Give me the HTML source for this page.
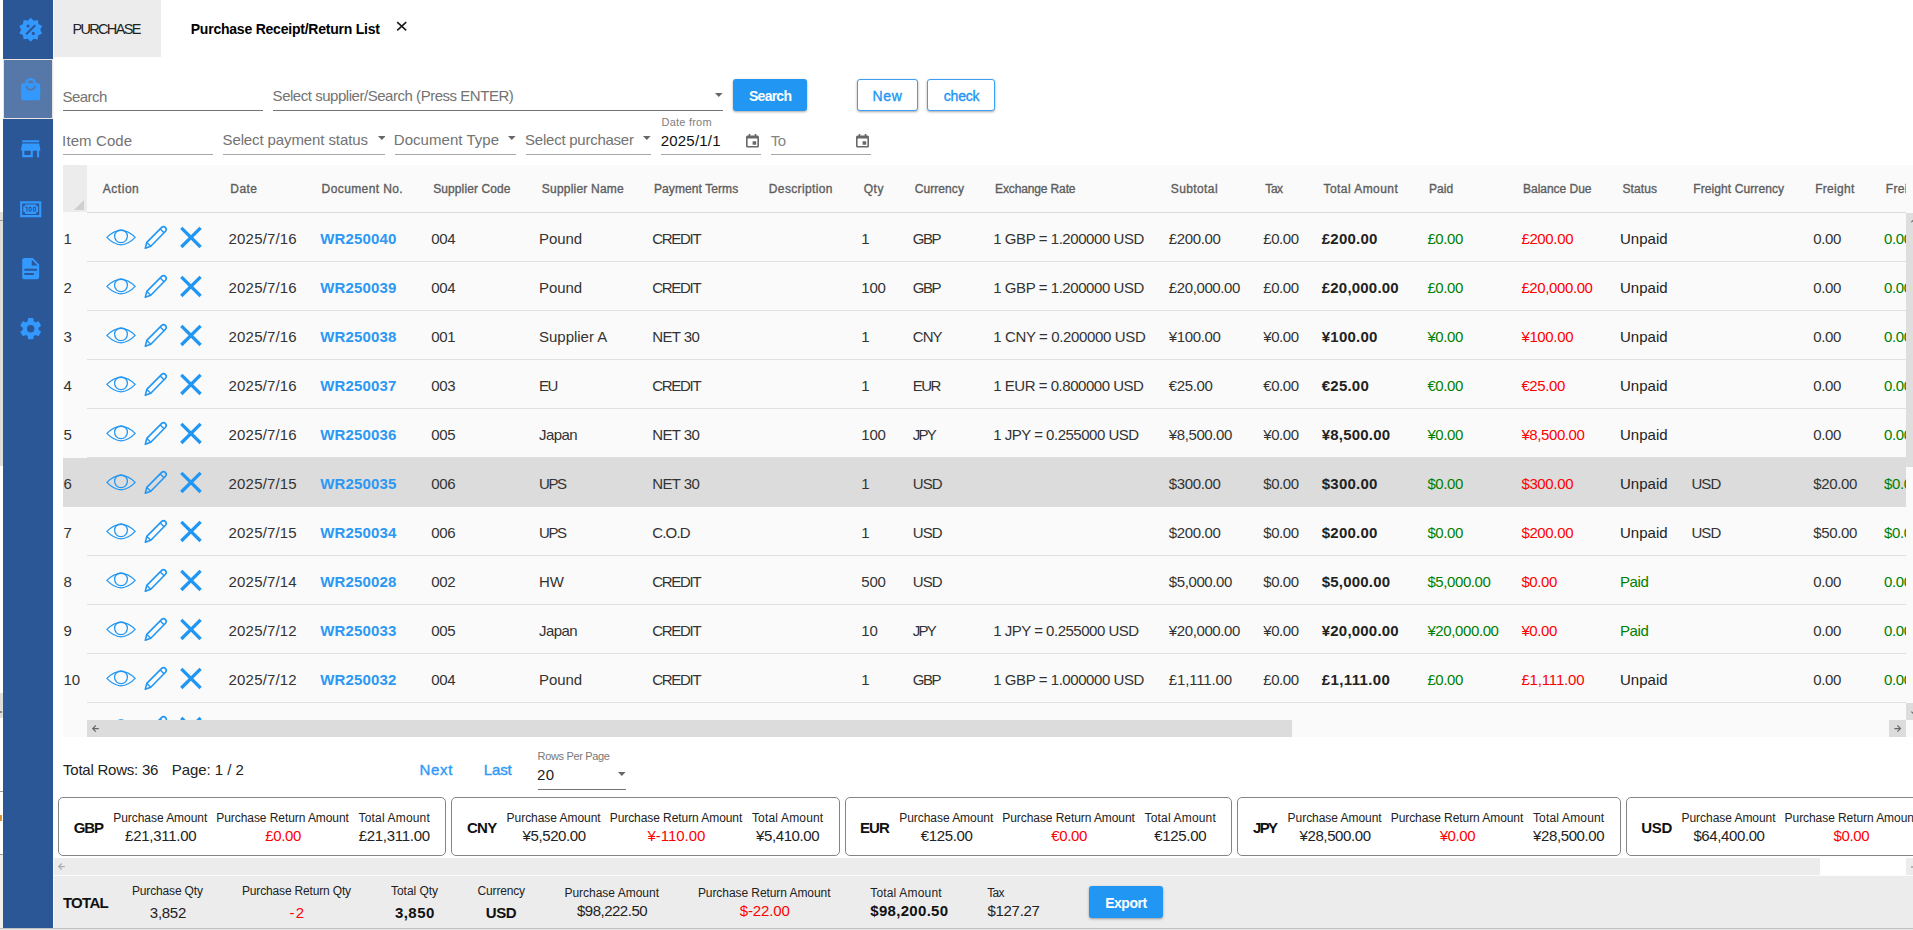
<!DOCTYPE html>
<html lang="en"><head><meta charset="utf-8"><title>Purchase Receipt/Return List</title><style>
html,body{margin:0;padding:0;}
body{width:1913px;height:930px;overflow:hidden;position:relative;background:#fff;font-family:"Liberation Sans",sans-serif;}
.r{position:absolute;display:block;}
.t{position:absolute;white-space:pre;line-height:20px;height:20px;}
.btn{border-radius:3px;box-shadow:0 1px 2.5px rgba(0,0,0,.35);}
</style></head><body>
<div class="r" style="left:0px;top:212px;width:3px;height:254px;background:#dedede;"></div>
<div class="r" style="left:0px;top:693px;width:3px;height:25px;background:#dedede;"></div>
<div class="r" style="left:0px;top:711px;width:2px;height:2px;background:#8a8a8a;"></div>
<div class="r" style="left:0px;top:220px;width:3px;height:1px;background:#9a9a9a;"></div>
<div class="r" style="left:0px;top:791px;width:3px;height:1px;background:#9a9a9a;"></div>
<div class="r" style="left:0px;top:854px;width:3px;height:1px;background:#a0a0a0;"></div>
<div class="r" style="left:0px;top:855px;width:3px;height:73px;background:#efefef;"></div>
<div class="r" style="left:0px;top:815px;width:2px;height:6px;background:#d9952b;"></div>
<div class="r" style="left:3px;top:0px;width:50px;height:928px;background:#2b5797;"></div>
<div class="r" style="left:53px;top:0px;width:1px;height:928px;background:#faf8f5;"></div>
<div class="r" style="left:3px;top:59px;width:50px;height:60px;background:#5578a9;box-sizing:border-box;border:1px solid #e9e4df;"></div>
<svg class="r" style="left:17.8px;top:16.7px;" width="25.4" height="25.4" viewBox="0 0 24 24"><path fill="#3399ff" d="M18.65,2.85L19.26,6.71L22.77,8.5L21,12L22.78,15.5L19.24,17.29L18.63,21.15L14.74,20.54L11.97,23.3L9.19,20.5L5.33,21.14L4.71,17.25L1.22,15.47L3,11.97L1.23,8.5L4.74,6.69L5.35,2.86L9.22,3.5L12,0.69L14.77,3.46L18.65,2.85M9.5,7A1.5,1.5 0 0,0 8,8.5A1.5,1.5 0 0,0 9.5,10A1.5,1.5 0 0,0 11,8.5A1.5,1.5 0 0,0 9.5,7M14.5,14A1.5,1.5 0 0,0 13,15.5A1.5,1.5 0 0,0 14.5,17A1.5,1.5 0 0,0 16,15.5A1.5,1.5 0 0,0 14.5,14M8.41,17L17,8.41L15.59,7L7,15.59L8.41,17Z"/></svg>
<svg class="r" style="left:17.8px;top:76.8px;" width="25.4" height="25.4" viewBox="0 0 24 24"><path fill="#3399ff" d="M12,13A5,5 0 0,1 7,8H9A3,3 0 0,0 12,11A3,3 0 0,0 15,8H17A5,5 0 0,1 12,13M12,3A3,3 0 0,1 15,6H9A3,3 0 0,1 12,3M19,6H17A5,5 0 0,0 12,1A5,5 0 0,0 7,6H5C3.89,6 3,6.89 3,8V20A2,2 0 0,0 5,22H19A2,2 0 0,0 21,20V8C21,6.89 20.1,6 19,6Z"/></svg>
<svg class="r" style="left:17.9px;top:136.3px;" width="25.4" height="25.4" viewBox="0 0 24 24"><path fill="#3399ff" d="M12,18H6V14H12M21,14V12L20,7H4L3,12V14H4V20H14V14H18V20H20V14M20,4H4V6H20V4Z"/></svg>
<svg class="r" style="left:17.7px;top:196.2px;" width="25.4" height="25.4" viewBox="0 0 24 24"><path fill="#3399ff" d="M2,5H22V20H2V5M20,18V7H4V18H20M17,8A2,2 0 0,0 19,10V15A2,2 0 0,0 17,17H7A2,2 0 0,0 5,15V10A2,2 0 0,0 7,8H17M17,13V12C17,10.9 16.33,10 15.5,10C14.67,10 14,10.9 14,12V13C14,14.1 14.67,15 15.5,15C16.33,15 17,14.1 17,13M15.5,11A0.5,0.5 0 0,1 16,11.5V13.5A0.5,0.5 0 0,1 15.5,14A0.5,0.5 0 0,1 15,13.5V11.5A0.5,0.5 0 0,1 15.5,11M13,13V12C13,10.9 12.33,10 11.5,10C10.67,10 10,10.9 10,12V13C10,14.1 10.67,15 11.5,15C12.33,15 13,14.1 13,13M11.5,11A0.5,0.5 0 0,1 12,11.5V13.5A0.5,0.5 0 0,1 11.5,14A0.5,0.5 0 0,1 11,13.5V11.5A0.5,0.5 0 0,1 11.5,11M8,15H9V10H8L7,10.5V11.5L8,11V15Z"/></svg>
<svg class="r" style="left:18.0px;top:256.3px;" width="25.4" height="25.4" viewBox="0 0 24 24"><path fill="#3399ff" d="M13,9H18.5L13,3.5V9M6,2H14L20,8V20A2,2 0 0,1 18,22H6C4.89,22 4,21.1 4,20V4C4,2.89 4.89,2 6,2M15,18V16H6V18H15M18,14V12H6V14H18Z"/></svg>
<svg class="r" style="left:18.0px;top:316.3px;" width="25.4" height="25.4" viewBox="0 0 24 24"><path fill="#3399ff" d="M12,15.5A3.5,3.5 0 0,1 8.5,12A3.5,3.5 0 0,1 12,8.5A3.5,3.5 0 0,1 15.5,12A3.5,3.5 0 0,1 12,15.5M19.43,12.97C19.47,12.65 19.5,12.33 19.5,12C19.5,11.67 19.47,11.34 19.43,11L21.54,9.37C21.73,9.22 21.78,8.95 21.66,8.73L19.66,5.27C19.54,5.05 19.27,4.96 19.05,5.05L16.56,6.05C16.04,5.66 15.5,5.32 14.87,5.07L14.5,2.42C14.46,2.18 14.25,2 14,2H10C9.75,2 9.54,2.18 9.5,2.42L9.13,5.07C8.5,5.32 7.96,5.66 7.44,6.05L4.95,5.05C4.73,4.96 4.46,5.05 4.34,5.27L2.34,8.73C2.21,8.95 2.27,9.22 2.46,9.37L4.57,11C4.53,11.34 4.5,11.67 4.5,12C4.5,12.33 4.53,12.65 4.57,12.97L2.46,14.63C2.27,14.78 2.21,15.05 2.34,15.27L4.34,18.73C4.46,18.95 4.73,19.03 4.95,18.95L7.44,17.94C7.96,18.34 8.5,18.68 9.13,18.93L9.5,21.58C9.54,21.82 9.75,22 10,22H14C14.25,22 14.46,21.82 14.5,21.58L14.87,18.93C15.5,18.67 16.04,18.34 16.56,17.94L19.05,18.95C19.27,19.03 19.54,18.95 19.66,18.73L21.66,15.27C21.78,15.05 21.73,14.78 21.54,14.63L19.43,12.97Z"/></svg>
<div class="r" style="left:54px;top:0px;width:106.6px;height:57px;background:#ececec;"></div>
<span class="t" style="left:72.41px;top:19.00px;font-size:14.5px;color:#222;letter-spacing:-1.667px;">PURCHASE</span>
<span class="t" style="left:190.76px;top:19.00px;font-size:14px;color:#000;letter-spacing:-0.225px;font-weight:700;">Purchase Receipt/Return List</span>
<svg class="r" style="left:395px;top:20px;" width="14" height="14" viewBox="0 0 14 14"><path d="M2.2,2.2L11.2,10.3M11.2,2.2L2.2,10.3" stroke="#1a1a1a" stroke-width="1.6" fill="none"/></svg>
<span class="t" style="left:62.42px;top:87.00px;font-size:15px;color:#737373;letter-spacing:-0.515px;">Search</span>
<div class="r" style="left:63px;top:110px;width:200px;height:1px;background:#737373;"></div>
<span class="t" style="left:272.60px;top:86.00px;font-size:15px;color:#737373;letter-spacing:-0.467px;">Select supplier/Search (Press ENTER)</span>
<div class="r" style="left:273px;top:110px;width:450px;height:1px;background:#737373;"></div>
<svg class="r" style="left:715.3px;top:93px;" width="7.6" height="4" viewBox="0 0 7.6 4"><path d="M0,0H7.6L3.8,4Z" fill="#666"/></svg>
<div class="r btn" style="left:733px;top:79px;width:74px;height:31.5px;background:#2196f3;"></div>
<span class="t" style="left:749.00px;top:86.00px;font-size:14px;color:#fff;letter-spacing:-0.746px;font-weight:700;">Search</span>
<div class="r btn" style="left:857px;top:79px;width:60.5px;height:31.5px;background:#fff;box-sizing:border-box;border:1px solid #3a9ff5;"></div>
<span class="t" style="left:872.55px;top:86.00px;font-size:14px;color:#2196f3;letter-spacing:0.599px;-webkit-text-stroke:0.35px currentColor;">New</span>
<div class="r btn" style="left:927px;top:79px;width:67.6px;height:31.5px;background:#fff;box-sizing:border-box;border:1px solid #3a9ff5;"></div>
<span class="t" style="left:943.81px;top:86.00px;font-size:14px;color:#2196f3;letter-spacing:-0.226px;-webkit-text-stroke:0.35px currentColor;">check</span>
<span class="t" style="left:62.12px;top:131.00px;font-size:15px;color:#737373;letter-spacing:0.106px;">Item Code</span>
<div class="r" style="left:63px;top:154px;width:149.6px;height:1px;background:#a8a8a8;"></div>
<span class="t" style="left:222.52px;top:130.00px;font-size:15px;color:#737373;letter-spacing:-0.108px;">Select payment status</span>
<svg class="r" style="left:377.5px;top:135.8px;" width="7.6" height="4" viewBox="0 0 7.6 4"><path d="M0,0H7.6L3.8,4Z" fill="#666"/></svg>
<div class="r" style="left:223px;top:154px;width:162px;height:1px;background:#a8a8a8;"></div>
<span class="t" style="left:393.77px;top:130.00px;font-size:15px;color:#737373;letter-spacing:0.043px;">Document Type</span>
<svg class="r" style="left:508.3px;top:135.8px;" width="7.6" height="4" viewBox="0 0 7.6 4"><path d="M0,0H7.6L3.8,4Z" fill="#666"/></svg>
<div class="r" style="left:395px;top:154px;width:121px;height:1px;background:#a8a8a8;"></div>
<span class="t" style="left:525.12px;top:130.00px;font-size:15px;color:#737373;letter-spacing:-0.249px;">Select purchaser</span>
<svg class="r" style="left:643.2px;top:135.8px;" width="7.6" height="4" viewBox="0 0 7.6 4"><path d="M0,0H7.6L3.8,4Z" fill="#666"/></svg>
<div class="r" style="left:526px;top:154px;width:125px;height:1px;background:#a8a8a8;"></div>
<span class="t" style="left:661.60px;top:112.00px;font-size:11px;color:#808080;letter-spacing:0.216px;">Date from</span>
<span class="t" style="left:660.75px;top:131.00px;font-size:15px;color:#111;letter-spacing:0.199px;">2025/1/1</span>
<div class="r" style="left:661px;top:154px;width:100px;height:1px;background:#a8a8a8;"></div>
<span class="t" style="left:770.86px;top:131.00px;font-size:15px;color:#858585;letter-spacing:-0.677px;">To</span>
<div class="r" style="left:771px;top:154px;width:100px;height:1px;background:#a8a8a8;"></div>
<svg class="r" style="left:746px;top:134px;" width="13" height="13.6" viewBox="0 0 13 13.6"><path fill="#686868" fill-rule="evenodd" d="M2.6,0H4.3V1.4H8.7V0H10.4V1.4H11.4Q13,1.4 13,3V12Q13,13.6 11.4,13.6H1.6Q0,13.6 0,12V3Q0,1.4 1.6,1.4H2.6ZM1.6,4.6V12H11.4V4.6ZM6.6,7.2H10.2V10.8H6.6Z"/></svg>
<svg class="r" style="left:856px;top:134px;" width="13" height="13.6" viewBox="0 0 13 13.6"><path fill="#686868" fill-rule="evenodd" d="M2.6,0H4.3V1.4H8.7V0H10.4V1.4H11.4Q13,1.4 13,3V12Q13,13.6 11.4,13.6H1.6Q0,13.6 0,12V3Q0,1.4 1.6,1.4H2.6ZM1.6,4.6V12H11.4V4.6ZM6.6,7.2H10.2V10.8H6.6Z"/></svg>
<div class="r" style="left:63px;top:165px;width:1850px;height:572px;background:#fafafa;"></div>
<div class="r" style="left:63px;top:165px;width:24px;height:47px;background:#ececec;"></div>
<svg class="r" style="left:74px;top:200px;" width="10" height="10" viewBox="0 0 10 10"><path d="M10,0V10H0Z" fill="#cfcfcf"/></svg>
<div class="r" style="left:87px;top:212px;width:1819px;height:1px;background:#dcdcdc;"></div>
<span class="t" style="left:102.78px;top:179.00px;font-size:12px;color:#5e5e5e;letter-spacing:0.529px;-webkit-text-stroke:0.35px currentColor;">Action</span>
<span class="t" style="left:230.32px;top:179.00px;font-size:12px;color:#5e5e5e;letter-spacing:0.419px;-webkit-text-stroke:0.35px currentColor;">Date</span>
<span class="t" style="left:321.62px;top:179.00px;font-size:12px;color:#5e5e5e;letter-spacing:0.398px;-webkit-text-stroke:0.35px currentColor;">Document No.</span>
<span class="t" style="left:433.16px;top:179.00px;font-size:12px;color:#5e5e5e;letter-spacing:0.110px;-webkit-text-stroke:0.35px currentColor;">Supplier Code</span>
<span class="t" style="left:541.86px;top:179.00px;font-size:12px;color:#5e5e5e;letter-spacing:0.200px;-webkit-text-stroke:0.35px currentColor;">Supplier Name</span>
<span class="t" style="left:654.02px;top:179.00px;font-size:12px;color:#5e5e5e;letter-spacing:0.081px;-webkit-text-stroke:0.35px currentColor;">Payment Terms</span>
<span class="t" style="left:768.82px;top:179.00px;font-size:12px;color:#5e5e5e;letter-spacing:0.363px;-webkit-text-stroke:0.35px currentColor;">Description</span>
<span class="t" style="left:863.63px;top:179.00px;font-size:12px;color:#5e5e5e;letter-spacing:0.660px;-webkit-text-stroke:0.35px currentColor;">Qty</span>
<span class="t" style="left:914.69px;top:179.00px;font-size:12px;color:#5e5e5e;letter-spacing:0.078px;-webkit-text-stroke:0.35px currentColor;">Currency</span>
<span class="t" style="left:995.02px;top:179.00px;font-size:12px;color:#5e5e5e;letter-spacing:-0.129px;-webkit-text-stroke:0.35px currentColor;">Exchange Rate</span>
<span class="t" style="left:1170.76px;top:179.00px;font-size:12px;color:#5e5e5e;letter-spacing:0.400px;-webkit-text-stroke:0.35px currentColor;">Subtotal</span>
<span class="t" style="left:1265.33px;top:179.00px;font-size:12px;color:#5e5e5e;letter-spacing:-0.445px;-webkit-text-stroke:0.35px currentColor;">Tax</span>
<span class="t" style="left:1323.53px;top:179.00px;font-size:12px;color:#5e5e5e;letter-spacing:0.444px;-webkit-text-stroke:0.35px currentColor;">Total Amount</span>
<span class="t" style="left:1429.02px;top:179.00px;font-size:12px;color:#5e5e5e;letter-spacing:0.076px;-webkit-text-stroke:0.35px currentColor;">Paid</span>
<span class="t" style="left:1523.02px;top:179.00px;font-size:12px;color:#5e5e5e;letter-spacing:-0.020px;-webkit-text-stroke:0.35px currentColor;">Balance Due</span>
<span class="t" style="left:1622.46px;top:179.00px;font-size:12px;color:#5e5e5e;letter-spacing:0.109px;-webkit-text-stroke:0.35px currentColor;">Status</span>
<span class="t" style="left:1693.22px;top:179.00px;font-size:12px;color:#5e5e5e;letter-spacing:0.096px;-webkit-text-stroke:0.35px currentColor;">Freight Currency</span>
<span class="t" style="left:1815.22px;top:179.00px;font-size:12px;color:#5e5e5e;letter-spacing:0.285px;-webkit-text-stroke:0.35px currentColor;">Freight</span>
<div class="r" style="left:1880px;top:170px;width:26px;height:40px;overflow:hidden;">
<span class="t" style="left:5.82px;top:9.00px;font-size:12px;color:#5e5e5e;letter-spacing:0.285px;-webkit-text-stroke:0.35px currentColor;">Freight</span>
</div>
<div class="r" style="left:87px;top:261px;width:1819px;height:1px;background:#e0e0e0;"></div>
<span class="t" style="left:63.60px;top:229.00px;font-size:15px;color:#333;letter-spacing:-0.258px;">1</span>
<svg class="r" style="left:100px;top:220px;" width="110" height="34" viewBox="100 220 110 34"><path d="M106.9,237.4Q121,223.4 135.2,237.4Q121,252.1 106.9,237.4Z" fill="none" stroke="#2196f3" stroke-width="1.25" stroke-linejoin="round"/><circle cx="121" cy="236.3" r="6.4" fill="none" stroke="#2196f3" stroke-width="1.25"/><path d="M145.3,248.2L146.8,242.4L161.7,227.4Q163.6,225.7 165.5,227.6Q167.2,229.5 165.5,231.3L150.8,246.3Z" fill="none" stroke="#2196f3" stroke-width="1.6" stroke-linejoin="round"/><path d="M146.8,242.4L150.8,246.3M160.2,228.9L164.1,232.8" fill="none" stroke="#2196f3" stroke-width="1.4"/><path d="M181.3,227.9L200.6,247.0M200.6,227.9L181.3,247.0" fill="none" stroke="#2196f3" stroke-width="3.3"/></svg>
<span class="t" style="left:228.60px;top:229.00px;font-size:15px;color:#333;letter-spacing:0.171px;">2025/7/16</span>
<span class="t" style="left:320.30px;top:229.00px;font-size:15px;color:#2b98f3;letter-spacing:0.141px;font-weight:700;">WR250040</span>
<span class="t" style="left:431.20px;top:229.00px;font-size:15px;color:#333;letter-spacing:-0.258px;">004</span>
<span class="t" style="left:539.00px;top:229.00px;font-size:15px;color:#333;letter-spacing:-0.084px;">Pound</span>
<span class="t" style="left:652.20px;top:229.00px;font-size:15px;color:#333;letter-spacing:-1.270px;">CREDIT</span>
<span class="t" style="left:861.30px;top:229.00px;font-size:15px;color:#333;letter-spacing:-0.258px;">1</span>
<span class="t" style="left:912.80px;top:229.00px;font-size:15px;color:#333;letter-spacing:-1.461px;">GBP</span>
<span class="t" style="left:993.20px;top:229.00px;font-size:15px;color:#333;letter-spacing:-0.435px;">1 GBP = 1.200000 USD</span>
<span class="t" style="left:1168.80px;top:229.00px;font-size:15px;color:#333;letter-spacing:-0.352px;">£200.00</span>
<span class="t" style="left:1263.20px;top:229.00px;font-size:15px;color:#333;letter-spacing:-0.390px;">£0.00</span>
<span class="t" style="left:1321.80px;top:229.00px;font-size:15px;color:#222;letter-spacing:0.220px;font-weight:700;">£200.00</span>
<span class="t" style="left:1427.40px;top:229.00px;font-size:15px;color:#008000;letter-spacing:-0.390px;">£0.00</span>
<span class="t" style="left:1521.40px;top:229.00px;font-size:15px;color:#ff0000;letter-spacing:-0.352px;">£200.00</span>
<span class="t" style="left:1620.00px;top:229.00px;font-size:15px;color:#222;letter-spacing:0.021px;">Unpaid</span>
<span class="t" style="left:1813.30px;top:229.00px;font-size:15px;color:#333;letter-spacing:-0.423px;">0.00</span>
<div class="r" style="left:1880px;top:223px;width:26px;height:30px;overflow:hidden;">
<span class="t" style="left:4.10px;top:6.00px;font-size:15px;color:#008000;letter-spacing:-0.423px;">0.00</span>
</div>
<div class="r" style="left:87px;top:310px;width:1819px;height:1px;background:#e0e0e0;"></div>
<span class="t" style="left:63.60px;top:278.00px;font-size:15px;color:#333;letter-spacing:-0.258px;">2</span>
<svg class="r" style="left:100px;top:269px;" width="110" height="34" viewBox="100 220 110 34"><path d="M106.9,237.4Q121,223.4 135.2,237.4Q121,252.1 106.9,237.4Z" fill="none" stroke="#2196f3" stroke-width="1.25" stroke-linejoin="round"/><circle cx="121" cy="236.3" r="6.4" fill="none" stroke="#2196f3" stroke-width="1.25"/><path d="M145.3,248.2L146.8,242.4L161.7,227.4Q163.6,225.7 165.5,227.6Q167.2,229.5 165.5,231.3L150.8,246.3Z" fill="none" stroke="#2196f3" stroke-width="1.6" stroke-linejoin="round"/><path d="M146.8,242.4L150.8,246.3M160.2,228.9L164.1,232.8" fill="none" stroke="#2196f3" stroke-width="1.4"/><path d="M181.3,227.9L200.6,247.0M200.6,227.9L181.3,247.0" fill="none" stroke="#2196f3" stroke-width="3.3"/></svg>
<span class="t" style="left:228.60px;top:278.00px;font-size:15px;color:#333;letter-spacing:0.171px;">2025/7/16</span>
<span class="t" style="left:320.30px;top:278.00px;font-size:15px;color:#2b98f3;letter-spacing:0.141px;font-weight:700;">WR250039</span>
<span class="t" style="left:431.20px;top:278.00px;font-size:15px;color:#333;letter-spacing:-0.258px;">004</span>
<span class="t" style="left:539.00px;top:278.00px;font-size:15px;color:#333;letter-spacing:-0.084px;">Pound</span>
<span class="t" style="left:652.20px;top:278.00px;font-size:15px;color:#333;letter-spacing:-1.270px;">CREDIT</span>
<span class="t" style="left:861.30px;top:278.00px;font-size:15px;color:#333;letter-spacing:-0.258px;">100</span>
<span class="t" style="left:912.80px;top:278.00px;font-size:15px;color:#333;letter-spacing:-1.461px;">GBP</span>
<span class="t" style="left:993.20px;top:278.00px;font-size:15px;color:#333;letter-spacing:-0.435px;">1 GBP = 1.200000 USD</span>
<span class="t" style="left:1168.80px;top:278.00px;font-size:15px;color:#333;letter-spacing:-0.389px;">£20,000.00</span>
<span class="t" style="left:1263.20px;top:278.00px;font-size:15px;color:#333;letter-spacing:-0.390px;">£0.00</span>
<span class="t" style="left:1321.80px;top:278.00px;font-size:15px;color:#222;letter-spacing:0.196px;font-weight:700;">£20,000.00</span>
<span class="t" style="left:1427.40px;top:278.00px;font-size:15px;color:#008000;letter-spacing:-0.390px;">£0.00</span>
<span class="t" style="left:1521.40px;top:278.00px;font-size:15px;color:#ff0000;letter-spacing:-0.389px;">£20,000.00</span>
<span class="t" style="left:1620.00px;top:278.00px;font-size:15px;color:#222;letter-spacing:0.021px;">Unpaid</span>
<span class="t" style="left:1813.30px;top:278.00px;font-size:15px;color:#333;letter-spacing:-0.423px;">0.00</span>
<div class="r" style="left:1880px;top:272px;width:26px;height:30px;overflow:hidden;">
<span class="t" style="left:4.10px;top:6.00px;font-size:15px;color:#008000;letter-spacing:-0.423px;">0.00</span>
</div>
<div class="r" style="left:87px;top:359px;width:1819px;height:1px;background:#e0e0e0;"></div>
<span class="t" style="left:63.60px;top:327.00px;font-size:15px;color:#333;letter-spacing:-0.258px;">3</span>
<svg class="r" style="left:100px;top:318px;" width="110" height="34" viewBox="100 220 110 34"><path d="M106.9,237.4Q121,223.4 135.2,237.4Q121,252.1 106.9,237.4Z" fill="none" stroke="#2196f3" stroke-width="1.25" stroke-linejoin="round"/><circle cx="121" cy="236.3" r="6.4" fill="none" stroke="#2196f3" stroke-width="1.25"/><path d="M145.3,248.2L146.8,242.4L161.7,227.4Q163.6,225.7 165.5,227.6Q167.2,229.5 165.5,231.3L150.8,246.3Z" fill="none" stroke="#2196f3" stroke-width="1.6" stroke-linejoin="round"/><path d="M146.8,242.4L150.8,246.3M160.2,228.9L164.1,232.8" fill="none" stroke="#2196f3" stroke-width="1.4"/><path d="M181.3,227.9L200.6,247.0M200.6,227.9L181.3,247.0" fill="none" stroke="#2196f3" stroke-width="3.3"/></svg>
<span class="t" style="left:228.60px;top:327.00px;font-size:15px;color:#333;letter-spacing:0.171px;">2025/7/16</span>
<span class="t" style="left:320.30px;top:327.00px;font-size:15px;color:#2b98f3;letter-spacing:0.141px;font-weight:700;">WR250038</span>
<span class="t" style="left:431.20px;top:327.00px;font-size:15px;color:#333;letter-spacing:-0.258px;">001</span>
<span class="t" style="left:539.00px;top:327.00px;font-size:15px;color:#333;letter-spacing:-0.021px;">Supplier A</span>
<span class="t" style="left:652.20px;top:327.00px;font-size:15px;color:#333;letter-spacing:-0.608px;">NET 30</span>
<span class="t" style="left:861.30px;top:327.00px;font-size:15px;color:#333;letter-spacing:-0.258px;">1</span>
<span class="t" style="left:912.80px;top:327.00px;font-size:15px;color:#333;letter-spacing:-0.958px;">CNY</span>
<span class="t" style="left:993.20px;top:327.00px;font-size:15px;color:#333;letter-spacing:-0.360px;">1 CNY = 0.200000 USD</span>
<span class="t" style="left:1168.80px;top:327.00px;font-size:15px;color:#333;letter-spacing:-0.352px;">¥100.00</span>
<span class="t" style="left:1263.20px;top:327.00px;font-size:15px;color:#333;letter-spacing:-0.390px;">¥0.00</span>
<span class="t" style="left:1321.80px;top:327.00px;font-size:15px;color:#222;letter-spacing:0.220px;font-weight:700;">¥100.00</span>
<span class="t" style="left:1427.40px;top:327.00px;font-size:15px;color:#008000;letter-spacing:-0.390px;">¥0.00</span>
<span class="t" style="left:1521.40px;top:327.00px;font-size:15px;color:#ff0000;letter-spacing:-0.352px;">¥100.00</span>
<span class="t" style="left:1620.00px;top:327.00px;font-size:15px;color:#222;letter-spacing:0.021px;">Unpaid</span>
<span class="t" style="left:1813.30px;top:327.00px;font-size:15px;color:#333;letter-spacing:-0.423px;">0.00</span>
<div class="r" style="left:1880px;top:321px;width:26px;height:30px;overflow:hidden;">
<span class="t" style="left:4.10px;top:6.00px;font-size:15px;color:#008000;letter-spacing:-0.423px;">0.00</span>
</div>
<div class="r" style="left:87px;top:408px;width:1819px;height:1px;background:#e0e0e0;"></div>
<span class="t" style="left:63.60px;top:376.00px;font-size:15px;color:#333;letter-spacing:-0.258px;">4</span>
<svg class="r" style="left:100px;top:367px;" width="110" height="34" viewBox="100 220 110 34"><path d="M106.9,237.4Q121,223.4 135.2,237.4Q121,252.1 106.9,237.4Z" fill="none" stroke="#2196f3" stroke-width="1.25" stroke-linejoin="round"/><circle cx="121" cy="236.3" r="6.4" fill="none" stroke="#2196f3" stroke-width="1.25"/><path d="M145.3,248.2L146.8,242.4L161.7,227.4Q163.6,225.7 165.5,227.6Q167.2,229.5 165.5,231.3L150.8,246.3Z" fill="none" stroke="#2196f3" stroke-width="1.6" stroke-linejoin="round"/><path d="M146.8,242.4L150.8,246.3M160.2,228.9L164.1,232.8" fill="none" stroke="#2196f3" stroke-width="1.4"/><path d="M181.3,227.9L200.6,247.0M200.6,227.9L181.3,247.0" fill="none" stroke="#2196f3" stroke-width="3.3"/></svg>
<span class="t" style="left:228.60px;top:376.00px;font-size:15px;color:#333;letter-spacing:0.171px;">2025/7/16</span>
<span class="t" style="left:320.30px;top:376.00px;font-size:15px;color:#2b98f3;letter-spacing:0.141px;font-weight:700;">WR250037</span>
<span class="t" style="left:431.20px;top:376.00px;font-size:15px;color:#333;letter-spacing:-0.258px;">003</span>
<span class="t" style="left:539.00px;top:376.00px;font-size:15px;color:#333;letter-spacing:-1.479px;">EU</span>
<span class="t" style="left:652.20px;top:376.00px;font-size:15px;color:#333;letter-spacing:-1.270px;">CREDIT</span>
<span class="t" style="left:861.30px;top:376.00px;font-size:15px;color:#333;letter-spacing:-0.258px;">1</span>
<span class="t" style="left:912.80px;top:376.00px;font-size:15px;color:#333;letter-spacing:-1.602px;">EUR</span>
<span class="t" style="left:993.20px;top:376.00px;font-size:15px;color:#333;letter-spacing:-0.470px;">1 EUR = 0.800000 USD</span>
<span class="t" style="left:1168.80px;top:376.00px;font-size:15px;color:#333;letter-spacing:-0.368px;">€25.00</span>
<span class="t" style="left:1263.20px;top:376.00px;font-size:15px;color:#333;letter-spacing:-0.390px;">€0.00</span>
<span class="t" style="left:1321.80px;top:376.00px;font-size:15px;color:#222;letter-spacing:0.209px;font-weight:700;">€25.00</span>
<span class="t" style="left:1427.40px;top:376.00px;font-size:15px;color:#008000;letter-spacing:-0.390px;">€0.00</span>
<span class="t" style="left:1521.40px;top:376.00px;font-size:15px;color:#ff0000;letter-spacing:-0.368px;">€25.00</span>
<span class="t" style="left:1620.00px;top:376.00px;font-size:15px;color:#222;letter-spacing:0.021px;">Unpaid</span>
<span class="t" style="left:1813.30px;top:376.00px;font-size:15px;color:#333;letter-spacing:-0.423px;">0.00</span>
<div class="r" style="left:1880px;top:370px;width:26px;height:30px;overflow:hidden;">
<span class="t" style="left:4.10px;top:6.00px;font-size:15px;color:#008000;letter-spacing:-0.423px;">0.00</span>
</div>
<div class="r" style="left:87px;top:457px;width:1819px;height:1px;background:#e0e0e0;"></div>
<span class="t" style="left:63.60px;top:425.00px;font-size:15px;color:#333;letter-spacing:-0.258px;">5</span>
<svg class="r" style="left:100px;top:416px;" width="110" height="34" viewBox="100 220 110 34"><path d="M106.9,237.4Q121,223.4 135.2,237.4Q121,252.1 106.9,237.4Z" fill="none" stroke="#2196f3" stroke-width="1.25" stroke-linejoin="round"/><circle cx="121" cy="236.3" r="6.4" fill="none" stroke="#2196f3" stroke-width="1.25"/><path d="M145.3,248.2L146.8,242.4L161.7,227.4Q163.6,225.7 165.5,227.6Q167.2,229.5 165.5,231.3L150.8,246.3Z" fill="none" stroke="#2196f3" stroke-width="1.6" stroke-linejoin="round"/><path d="M146.8,242.4L150.8,246.3M160.2,228.9L164.1,232.8" fill="none" stroke="#2196f3" stroke-width="1.4"/><path d="M181.3,227.9L200.6,247.0M200.6,227.9L181.3,247.0" fill="none" stroke="#2196f3" stroke-width="3.3"/></svg>
<span class="t" style="left:228.60px;top:425.00px;font-size:15px;color:#333;letter-spacing:0.171px;">2025/7/16</span>
<span class="t" style="left:320.30px;top:425.00px;font-size:15px;color:#2b98f3;letter-spacing:0.141px;font-weight:700;">WR250036</span>
<span class="t" style="left:431.20px;top:425.00px;font-size:15px;color:#333;letter-spacing:-0.258px;">005</span>
<span class="t" style="left:539.00px;top:425.00px;font-size:15px;color:#333;letter-spacing:-0.594px;">Japan</span>
<span class="t" style="left:652.20px;top:425.00px;font-size:15px;color:#333;letter-spacing:-0.608px;">NET 30</span>
<span class="t" style="left:861.30px;top:425.00px;font-size:15px;color:#333;letter-spacing:-0.258px;">100</span>
<span class="t" style="left:912.80px;top:425.00px;font-size:15px;color:#333;letter-spacing:-1.826px;">JPY</span>
<span class="t" style="left:993.20px;top:425.00px;font-size:15px;color:#333;letter-spacing:-0.490px;">1 JPY = 0.255000 USD</span>
<span class="t" style="left:1168.80px;top:425.00px;font-size:15px;color:#333;letter-spacing:-0.403px;">¥8,500.00</span>
<span class="t" style="left:1263.20px;top:425.00px;font-size:15px;color:#333;letter-spacing:-0.390px;">¥0.00</span>
<span class="t" style="left:1321.80px;top:425.00px;font-size:15px;color:#222;letter-spacing:0.186px;font-weight:700;">¥8,500.00</span>
<span class="t" style="left:1427.40px;top:425.00px;font-size:15px;color:#008000;letter-spacing:-0.390px;">¥0.00</span>
<span class="t" style="left:1521.40px;top:425.00px;font-size:15px;color:#ff0000;letter-spacing:-0.403px;">¥8,500.00</span>
<span class="t" style="left:1620.00px;top:425.00px;font-size:15px;color:#222;letter-spacing:0.021px;">Unpaid</span>
<span class="t" style="left:1813.30px;top:425.00px;font-size:15px;color:#333;letter-spacing:-0.423px;">0.00</span>
<div class="r" style="left:1880px;top:419px;width:26px;height:30px;overflow:hidden;">
<span class="t" style="left:4.10px;top:6.00px;font-size:15px;color:#008000;letter-spacing:-0.423px;">0.00</span>
</div>
<div class="r" style="left:63px;top:458px;width:1843px;height:49px;background:#dcdcdc;"></div>
<span class="t" style="left:63.60px;top:474.00px;font-size:15px;color:#333;letter-spacing:-0.258px;">6</span>
<svg class="r" style="left:100px;top:465px;" width="110" height="34" viewBox="100 220 110 34"><path d="M106.9,237.4Q121,223.4 135.2,237.4Q121,252.1 106.9,237.4Z" fill="none" stroke="#2196f3" stroke-width="1.25" stroke-linejoin="round"/><circle cx="121" cy="236.3" r="6.4" fill="none" stroke="#2196f3" stroke-width="1.25"/><path d="M145.3,248.2L146.8,242.4L161.7,227.4Q163.6,225.7 165.5,227.6Q167.2,229.5 165.5,231.3L150.8,246.3Z" fill="none" stroke="#2196f3" stroke-width="1.6" stroke-linejoin="round"/><path d="M146.8,242.4L150.8,246.3M160.2,228.9L164.1,232.8" fill="none" stroke="#2196f3" stroke-width="1.4"/><path d="M181.3,227.9L200.6,247.0M200.6,227.9L181.3,247.0" fill="none" stroke="#2196f3" stroke-width="3.3"/></svg>
<span class="t" style="left:228.60px;top:474.00px;font-size:15px;color:#333;letter-spacing:0.171px;">2025/7/15</span>
<span class="t" style="left:320.30px;top:474.00px;font-size:15px;color:#2b98f3;letter-spacing:0.141px;font-weight:700;">WR250035</span>
<span class="t" style="left:431.20px;top:474.00px;font-size:15px;color:#333;letter-spacing:-0.258px;">006</span>
<span class="t" style="left:539.00px;top:474.00px;font-size:15px;color:#333;letter-spacing:-1.395px;">UPS</span>
<span class="t" style="left:652.20px;top:474.00px;font-size:15px;color:#333;letter-spacing:-0.608px;">NET 30</span>
<span class="t" style="left:861.30px;top:474.00px;font-size:15px;color:#333;letter-spacing:-0.258px;">1</span>
<span class="t" style="left:912.80px;top:474.00px;font-size:15px;color:#333;letter-spacing:-0.965px;">USD</span>
<span class="t" style="left:1168.80px;top:474.00px;font-size:15px;color:#333;letter-spacing:-0.352px;">$300.00</span>
<span class="t" style="left:1263.20px;top:474.00px;font-size:15px;color:#333;letter-spacing:-0.390px;">$0.00</span>
<span class="t" style="left:1321.80px;top:474.00px;font-size:15px;color:#222;letter-spacing:0.220px;font-weight:700;">$300.00</span>
<span class="t" style="left:1427.40px;top:474.00px;font-size:15px;color:#008000;letter-spacing:-0.390px;">$0.00</span>
<span class="t" style="left:1521.40px;top:474.00px;font-size:15px;color:#ff0000;letter-spacing:-0.352px;">$300.00</span>
<span class="t" style="left:1620.00px;top:474.00px;font-size:15px;color:#222;letter-spacing:0.021px;">Unpaid</span>
<span class="t" style="left:1691.50px;top:474.00px;font-size:15px;color:#333;letter-spacing:-0.965px;">USD</span>
<span class="t" style="left:1813.30px;top:474.00px;font-size:15px;color:#333;letter-spacing:-0.368px;">$20.00</span>
<div class="r" style="left:1880px;top:468px;width:26px;height:30px;overflow:hidden;">
<span class="t" style="left:4.10px;top:6.00px;font-size:15px;color:#008000;letter-spacing:-0.390px;">$0.00</span>
</div>
<div class="r" style="left:87px;top:555px;width:1819px;height:1px;background:#e0e0e0;"></div>
<span class="t" style="left:63.60px;top:523.00px;font-size:15px;color:#333;letter-spacing:-0.258px;">7</span>
<svg class="r" style="left:100px;top:514px;" width="110" height="34" viewBox="100 220 110 34"><path d="M106.9,237.4Q121,223.4 135.2,237.4Q121,252.1 106.9,237.4Z" fill="none" stroke="#2196f3" stroke-width="1.25" stroke-linejoin="round"/><circle cx="121" cy="236.3" r="6.4" fill="none" stroke="#2196f3" stroke-width="1.25"/><path d="M145.3,248.2L146.8,242.4L161.7,227.4Q163.6,225.7 165.5,227.6Q167.2,229.5 165.5,231.3L150.8,246.3Z" fill="none" stroke="#2196f3" stroke-width="1.6" stroke-linejoin="round"/><path d="M146.8,242.4L150.8,246.3M160.2,228.9L164.1,232.8" fill="none" stroke="#2196f3" stroke-width="1.4"/><path d="M181.3,227.9L200.6,247.0M200.6,227.9L181.3,247.0" fill="none" stroke="#2196f3" stroke-width="3.3"/></svg>
<span class="t" style="left:228.60px;top:523.00px;font-size:15px;color:#333;letter-spacing:0.171px;">2025/7/15</span>
<span class="t" style="left:320.30px;top:523.00px;font-size:15px;color:#2b98f3;letter-spacing:0.141px;font-weight:700;">WR250034</span>
<span class="t" style="left:431.20px;top:523.00px;font-size:15px;color:#333;letter-spacing:-0.258px;">006</span>
<span class="t" style="left:539.00px;top:523.00px;font-size:15px;color:#333;letter-spacing:-1.395px;">UPS</span>
<span class="t" style="left:652.20px;top:523.00px;font-size:15px;color:#333;letter-spacing:-0.811px;">C.O.D</span>
<span class="t" style="left:861.30px;top:523.00px;font-size:15px;color:#333;letter-spacing:-0.258px;">1</span>
<span class="t" style="left:912.80px;top:523.00px;font-size:15px;color:#333;letter-spacing:-0.965px;">USD</span>
<span class="t" style="left:1168.80px;top:523.00px;font-size:15px;color:#333;letter-spacing:-0.352px;">$200.00</span>
<span class="t" style="left:1263.20px;top:523.00px;font-size:15px;color:#333;letter-spacing:-0.390px;">$0.00</span>
<span class="t" style="left:1321.80px;top:523.00px;font-size:15px;color:#222;letter-spacing:0.220px;font-weight:700;">$200.00</span>
<span class="t" style="left:1427.40px;top:523.00px;font-size:15px;color:#008000;letter-spacing:-0.390px;">$0.00</span>
<span class="t" style="left:1521.40px;top:523.00px;font-size:15px;color:#ff0000;letter-spacing:-0.352px;">$200.00</span>
<span class="t" style="left:1620.00px;top:523.00px;font-size:15px;color:#222;letter-spacing:0.021px;">Unpaid</span>
<span class="t" style="left:1691.50px;top:523.00px;font-size:15px;color:#333;letter-spacing:-0.965px;">USD</span>
<span class="t" style="left:1813.30px;top:523.00px;font-size:15px;color:#333;letter-spacing:-0.368px;">$50.00</span>
<div class="r" style="left:1880px;top:517px;width:26px;height:30px;overflow:hidden;">
<span class="t" style="left:4.10px;top:6.00px;font-size:15px;color:#008000;letter-spacing:-0.390px;">$0.00</span>
</div>
<div class="r" style="left:87px;top:604px;width:1819px;height:1px;background:#e0e0e0;"></div>
<span class="t" style="left:63.60px;top:572.00px;font-size:15px;color:#333;letter-spacing:-0.258px;">8</span>
<svg class="r" style="left:100px;top:563px;" width="110" height="34" viewBox="100 220 110 34"><path d="M106.9,237.4Q121,223.4 135.2,237.4Q121,252.1 106.9,237.4Z" fill="none" stroke="#2196f3" stroke-width="1.25" stroke-linejoin="round"/><circle cx="121" cy="236.3" r="6.4" fill="none" stroke="#2196f3" stroke-width="1.25"/><path d="M145.3,248.2L146.8,242.4L161.7,227.4Q163.6,225.7 165.5,227.6Q167.2,229.5 165.5,231.3L150.8,246.3Z" fill="none" stroke="#2196f3" stroke-width="1.6" stroke-linejoin="round"/><path d="M146.8,242.4L150.8,246.3M160.2,228.9L164.1,232.8" fill="none" stroke="#2196f3" stroke-width="1.4"/><path d="M181.3,227.9L200.6,247.0M200.6,227.9L181.3,247.0" fill="none" stroke="#2196f3" stroke-width="3.3"/></svg>
<span class="t" style="left:228.60px;top:572.00px;font-size:15px;color:#333;letter-spacing:0.171px;">2025/7/14</span>
<span class="t" style="left:320.30px;top:572.00px;font-size:15px;color:#2b98f3;letter-spacing:0.141px;font-weight:700;">WR250028</span>
<span class="t" style="left:431.20px;top:572.00px;font-size:15px;color:#333;letter-spacing:-0.258px;">002</span>
<span class="t" style="left:539.00px;top:572.00px;font-size:15px;color:#333;letter-spacing:-0.170px;">HW</span>
<span class="t" style="left:652.20px;top:572.00px;font-size:15px;color:#333;letter-spacing:-1.270px;">CREDIT</span>
<span class="t" style="left:861.30px;top:572.00px;font-size:15px;color:#333;letter-spacing:-0.258px;">500</span>
<span class="t" style="left:912.80px;top:572.00px;font-size:15px;color:#333;letter-spacing:-0.965px;">USD</span>
<span class="t" style="left:1168.80px;top:572.00px;font-size:15px;color:#333;letter-spacing:-0.403px;">$5,000.00</span>
<span class="t" style="left:1263.20px;top:572.00px;font-size:15px;color:#333;letter-spacing:-0.390px;">$0.00</span>
<span class="t" style="left:1321.80px;top:572.00px;font-size:15px;color:#222;letter-spacing:0.186px;font-weight:700;">$5,000.00</span>
<span class="t" style="left:1427.40px;top:572.00px;font-size:15px;color:#008000;letter-spacing:-0.403px;">$5,000.00</span>
<span class="t" style="left:1521.40px;top:572.00px;font-size:15px;color:#ff0000;letter-spacing:-0.390px;">$0.00</span>
<span class="t" style="left:1620.00px;top:572.00px;font-size:15px;color:#008000;letter-spacing:-0.387px;">Paid</span>
<span class="t" style="left:1813.30px;top:572.00px;font-size:15px;color:#333;letter-spacing:-0.423px;">0.00</span>
<div class="r" style="left:1880px;top:566px;width:26px;height:30px;overflow:hidden;">
<span class="t" style="left:4.10px;top:6.00px;font-size:15px;color:#008000;letter-spacing:-0.423px;">0.00</span>
</div>
<div class="r" style="left:87px;top:653px;width:1819px;height:1px;background:#e0e0e0;"></div>
<span class="t" style="left:63.60px;top:621.00px;font-size:15px;color:#333;letter-spacing:-0.258px;">9</span>
<svg class="r" style="left:100px;top:612px;" width="110" height="34" viewBox="100 220 110 34"><path d="M106.9,237.4Q121,223.4 135.2,237.4Q121,252.1 106.9,237.4Z" fill="none" stroke="#2196f3" stroke-width="1.25" stroke-linejoin="round"/><circle cx="121" cy="236.3" r="6.4" fill="none" stroke="#2196f3" stroke-width="1.25"/><path d="M145.3,248.2L146.8,242.4L161.7,227.4Q163.6,225.7 165.5,227.6Q167.2,229.5 165.5,231.3L150.8,246.3Z" fill="none" stroke="#2196f3" stroke-width="1.6" stroke-linejoin="round"/><path d="M146.8,242.4L150.8,246.3M160.2,228.9L164.1,232.8" fill="none" stroke="#2196f3" stroke-width="1.4"/><path d="M181.3,227.9L200.6,247.0M200.6,227.9L181.3,247.0" fill="none" stroke="#2196f3" stroke-width="3.3"/></svg>
<span class="t" style="left:228.60px;top:621.00px;font-size:15px;color:#333;letter-spacing:0.171px;">2025/7/12</span>
<span class="t" style="left:320.30px;top:621.00px;font-size:15px;color:#2b98f3;letter-spacing:0.141px;font-weight:700;">WR250033</span>
<span class="t" style="left:431.20px;top:621.00px;font-size:15px;color:#333;letter-spacing:-0.258px;">005</span>
<span class="t" style="left:539.00px;top:621.00px;font-size:15px;color:#333;letter-spacing:-0.594px;">Japan</span>
<span class="t" style="left:652.20px;top:621.00px;font-size:15px;color:#333;letter-spacing:-1.270px;">CREDIT</span>
<span class="t" style="left:861.30px;top:621.00px;font-size:15px;color:#333;letter-spacing:-0.258px;">10</span>
<span class="t" style="left:912.80px;top:621.00px;font-size:15px;color:#333;letter-spacing:-1.826px;">JPY</span>
<span class="t" style="left:993.20px;top:621.00px;font-size:15px;color:#333;letter-spacing:-0.490px;">1 JPY = 0.255000 USD</span>
<span class="t" style="left:1168.80px;top:621.00px;font-size:15px;color:#333;letter-spacing:-0.389px;">¥20,000.00</span>
<span class="t" style="left:1263.20px;top:621.00px;font-size:15px;color:#333;letter-spacing:-0.390px;">¥0.00</span>
<span class="t" style="left:1321.80px;top:621.00px;font-size:15px;color:#222;letter-spacing:0.196px;font-weight:700;">¥20,000.00</span>
<span class="t" style="left:1427.40px;top:621.00px;font-size:15px;color:#008000;letter-spacing:-0.389px;">¥20,000.00</span>
<span class="t" style="left:1521.40px;top:621.00px;font-size:15px;color:#ff0000;letter-spacing:-0.390px;">¥0.00</span>
<span class="t" style="left:1620.00px;top:621.00px;font-size:15px;color:#008000;letter-spacing:-0.387px;">Paid</span>
<span class="t" style="left:1813.30px;top:621.00px;font-size:15px;color:#333;letter-spacing:-0.423px;">0.00</span>
<div class="r" style="left:1880px;top:615px;width:26px;height:30px;overflow:hidden;">
<span class="t" style="left:4.10px;top:6.00px;font-size:15px;color:#008000;letter-spacing:-0.423px;">0.00</span>
</div>
<div class="r" style="left:87px;top:702px;width:1819px;height:1px;background:#e0e0e0;"></div>
<span class="t" style="left:63.60px;top:670.00px;font-size:15px;color:#333;letter-spacing:-0.258px;">10</span>
<svg class="r" style="left:100px;top:661px;" width="110" height="34" viewBox="100 220 110 34"><path d="M106.9,237.4Q121,223.4 135.2,237.4Q121,252.1 106.9,237.4Z" fill="none" stroke="#2196f3" stroke-width="1.25" stroke-linejoin="round"/><circle cx="121" cy="236.3" r="6.4" fill="none" stroke="#2196f3" stroke-width="1.25"/><path d="M145.3,248.2L146.8,242.4L161.7,227.4Q163.6,225.7 165.5,227.6Q167.2,229.5 165.5,231.3L150.8,246.3Z" fill="none" stroke="#2196f3" stroke-width="1.6" stroke-linejoin="round"/><path d="M146.8,242.4L150.8,246.3M160.2,228.9L164.1,232.8" fill="none" stroke="#2196f3" stroke-width="1.4"/><path d="M181.3,227.9L200.6,247.0M200.6,227.9L181.3,247.0" fill="none" stroke="#2196f3" stroke-width="3.3"/></svg>
<span class="t" style="left:228.60px;top:670.00px;font-size:15px;color:#333;letter-spacing:0.171px;">2025/7/12</span>
<span class="t" style="left:320.30px;top:670.00px;font-size:15px;color:#2b98f3;letter-spacing:0.141px;font-weight:700;">WR250032</span>
<span class="t" style="left:431.20px;top:670.00px;font-size:15px;color:#333;letter-spacing:-0.258px;">004</span>
<span class="t" style="left:539.00px;top:670.00px;font-size:15px;color:#333;letter-spacing:-0.084px;">Pound</span>
<span class="t" style="left:652.20px;top:670.00px;font-size:15px;color:#333;letter-spacing:-1.270px;">CREDIT</span>
<span class="t" style="left:861.30px;top:670.00px;font-size:15px;color:#333;letter-spacing:-0.258px;">1</span>
<span class="t" style="left:912.80px;top:670.00px;font-size:15px;color:#333;letter-spacing:-1.461px;">GBP</span>
<span class="t" style="left:993.20px;top:670.00px;font-size:15px;color:#333;letter-spacing:-0.435px;">1 GBP = 1.000000 USD</span>
<span class="t" style="left:1168.80px;top:670.00px;font-size:15px;color:#333;letter-spacing:-0.157px;">£1,111.00</span>
<span class="t" style="left:1263.20px;top:670.00px;font-size:15px;color:#333;letter-spacing:-0.390px;">£0.00</span>
<span class="t" style="left:1321.80px;top:670.00px;font-size:15px;color:#222;letter-spacing:0.370px;font-weight:700;">£1,111.00</span>
<span class="t" style="left:1427.40px;top:670.00px;font-size:15px;color:#008000;letter-spacing:-0.390px;">£0.00</span>
<span class="t" style="left:1521.40px;top:670.00px;font-size:15px;color:#ff0000;letter-spacing:-0.157px;">£1,111.00</span>
<span class="t" style="left:1620.00px;top:670.00px;font-size:15px;color:#222;letter-spacing:0.021px;">Unpaid</span>
<span class="t" style="left:1813.30px;top:670.00px;font-size:15px;color:#333;letter-spacing:-0.423px;">0.00</span>
<div class="r" style="left:1880px;top:664px;width:26px;height:30px;overflow:hidden;">
<span class="t" style="left:4.10px;top:6.00px;font-size:15px;color:#008000;letter-spacing:-0.423px;">0.00</span>
</div>
<div class="r" style="left:87px;top:703px;width:200px;height:17px;overflow:hidden;"><div class="r" style="left:-87px;top:-703px;">
<svg class="r" style="left:100px;top:710px;" width="110" height="34" viewBox="100 220 110 34"><path d="M106.9,237.4Q121,223.4 135.2,237.4Q121,252.1 106.9,237.4Z" fill="none" stroke="#2196f3" stroke-width="1.25" stroke-linejoin="round"/><circle cx="121" cy="236.3" r="6.4" fill="none" stroke="#2196f3" stroke-width="1.25"/><path d="M145.3,248.2L146.8,242.4L161.7,227.4Q163.6,225.7 165.5,227.6Q167.2,229.5 165.5,231.3L150.8,246.3Z" fill="none" stroke="#2196f3" stroke-width="1.6" stroke-linejoin="round"/><path d="M146.8,242.4L150.8,246.3M160.2,228.9L164.1,232.8" fill="none" stroke="#2196f3" stroke-width="1.4"/><path d="M181.3,227.9L200.6,247.0M200.6,227.9L181.3,247.0" fill="none" stroke="#2196f3" stroke-width="3.3"/></svg>
</div></div>
<div class="r" style="left:87px;top:720px;width:1819px;height:17px;background:#fafafa;"></div>
<div class="r" style="left:87px;top:720px;width:1205px;height:17px;background:#dcdcdc;"></div>
<svg class="r" style="left:92px;top:725.2px;" width="7.5" height="7.2" viewBox="0 0 7.5 7.2"><path d="M0.8,3.6H6.8M3.8,0.5L0.7,3.6L3.8,6.7" fill="none" stroke="#666" stroke-width="1.1"/></svg>
<div class="r" style="left:1889px;top:720px;width:17px;height:17px;background:#dcdcdc;"></div>
<svg class="r" style="left:1894px;top:725.2px;" width="7.5" height="7.2" viewBox="0 0 7.5 7.2"><path d="M0.4,3.6H6.4M3.4,0.5L6.5,3.6L3.4,6.7" fill="none" stroke="#666" stroke-width="1.1"/></svg>
<div class="r" style="left:1906px;top:213px;width:7px;height:507px;background:#fafafa;"></div>
<div class="r" style="left:1906px;top:213px;width:7px;height:254px;background:#dedede;"></div>
<div class="r" style="left:1906px;top:703px;width:7px;height:17px;background:#dcdcdc;"></div>
<svg class="r" style="left:1910.6px;top:218px;" width="3" height="6" viewBox="0 0 3 6"><path d="M0.3,4.2L3.4,1.1" stroke="#666" stroke-width="1.1" fill="none"/></svg>
<svg class="r" style="left:1910.6px;top:709.5px;" width="3" height="6" viewBox="0 0 3 6"><path d="M0.3,1.6L3.4,4.7" stroke="#666" stroke-width="1.1" fill="none"/></svg>
<span class="t" style="left:63.06px;top:760.00px;font-size:15px;color:#222;letter-spacing:-0.238px;">Total Rows: 36</span>
<span class="t" style="left:171.87px;top:760.00px;font-size:15px;color:#222;letter-spacing:-0.068px;">Page: 1 / 2</span>
<span class="t" style="left:419.47px;top:760.00px;font-size:15px;color:#2e98f8;letter-spacing:0.732px;-webkit-text-stroke:0.35px currentColor;">Next</span>
<span class="t" style="left:483.67px;top:760.00px;font-size:15px;color:#2e98f8;letter-spacing:-0.073px;-webkit-text-stroke:0.35px currentColor;">Last</span>
<span class="t" style="left:537.60px;top:746.00px;font-size:11px;color:#777;letter-spacing:-0.346px;">Rows Per Page</span>
<span class="t" style="left:537.05px;top:765.00px;font-size:15px;color:#222;letter-spacing:0.353px;">20</span>
<svg class="r" style="left:618.2px;top:772px;" width="7.6" height="4" viewBox="0 0 7.6 4"><path d="M0,0H7.6L3.8,4Z" fill="#666"/></svg>
<div class="r" style="left:538px;top:789px;width:88px;height:1px;background:#737373;"></div>
<div class="r" style="left:53px;top:790px;width:1860px;height:70px;overflow:hidden;"><div class="r" style="left:-53px;top:-790px;">
<div class="r" style="left:58px;top:797px;width:388px;height:59px;box-sizing:border-box;border:1px solid #858585;border-radius:5px;background:#fff;"></div>
<span class="t" style="left:73.78px;top:818.00px;font-size:15px;color:#111;letter-spacing:-1.144px;font-weight:700;">GBP</span>
<span class="t" style="left:113.22px;top:808.00px;font-size:12px;color:#222;letter-spacing:-0.047px;">Purchase Amount</span>
<span class="t" style="left:125.10px;top:826.00px;font-size:15px;color:#222;letter-spacing:-0.278px;">£21,311.00</span>
<span class="t" style="left:216.32px;top:808.00px;font-size:12px;color:#222;letter-spacing:-0.072px;">Purchase Return Amount</span>
<span class="t" style="left:265.25px;top:826.00px;font-size:15px;color:#ff0000;letter-spacing:-0.390px;">£0.00</span>
<span class="t" style="left:358.53px;top:808.00px;font-size:12px;color:#222;letter-spacing:0.171px;">Total Amount</span>
<span class="t" style="left:358.65px;top:826.00px;font-size:15px;color:#222;letter-spacing:-0.278px;">£21,311.00</span>
<div class="r" style="left:451px;top:797px;width:389px;height:59px;box-sizing:border-box;border:1px solid #858585;border-radius:5px;background:#fff;"></div>
<span class="t" style="left:466.88px;top:818.00px;font-size:15px;color:#111;letter-spacing:-0.707px;font-weight:700;">CNY</span>
<span class="t" style="left:506.62px;top:808.00px;font-size:12px;color:#222;letter-spacing:-0.047px;">Purchase Amount</span>
<span class="t" style="left:522.55px;top:826.00px;font-size:15px;color:#222;letter-spacing:-0.403px;">¥5,520.00</span>
<span class="t" style="left:609.72px;top:808.00px;font-size:12px;color:#222;letter-spacing:-0.072px;">Purchase Return Amount</span>
<span class="t" style="left:647.57px;top:826.00px;font-size:15px;color:#ff0000;letter-spacing:-0.043px;">¥-110.00</span>
<span class="t" style="left:751.93px;top:808.00px;font-size:12px;color:#222;letter-spacing:0.171px;">Total Amount</span>
<span class="t" style="left:756.10px;top:826.00px;font-size:15px;color:#222;letter-spacing:-0.403px;">¥5,410.00</span>
<div class="r" style="left:845px;top:797px;width:387px;height:59px;box-sizing:border-box;border:1px solid #858585;border-radius:5px;background:#fff;"></div>
<span class="t" style="left:860.00px;top:818.00px;font-size:15px;color:#111;letter-spacing:-0.930px;font-weight:700;">EUR</span>
<span class="t" style="left:899.22px;top:808.00px;font-size:12px;color:#222;letter-spacing:-0.047px;">Purchase Amount</span>
<span class="t" style="left:920.82px;top:826.00px;font-size:15px;color:#222;letter-spacing:-0.352px;">€125.00</span>
<span class="t" style="left:1002.32px;top:808.00px;font-size:12px;color:#222;letter-spacing:-0.072px;">Purchase Return Amount</span>
<span class="t" style="left:1051.25px;top:826.00px;font-size:15px;color:#ff0000;letter-spacing:-0.390px;">€0.00</span>
<span class="t" style="left:1144.53px;top:808.00px;font-size:12px;color:#222;letter-spacing:0.171px;">Total Amount</span>
<span class="t" style="left:1154.37px;top:826.00px;font-size:15px;color:#222;letter-spacing:-0.352px;">€125.00</span>
<div class="r" style="left:1237px;top:797px;width:384px;height:59px;box-sizing:border-box;border:1px solid #858585;border-radius:5px;background:#fff;"></div>
<span class="t" style="left:1253.07px;top:818.00px;font-size:15px;color:#111;letter-spacing:-1.645px;font-weight:700;">JPY</span>
<span class="t" style="left:1287.62px;top:808.00px;font-size:12px;color:#222;letter-spacing:-0.047px;">Purchase Amount</span>
<span class="t" style="left:1299.50px;top:826.00px;font-size:15px;color:#222;letter-spacing:-0.389px;">¥28,500.00</span>
<span class="t" style="left:1390.72px;top:808.00px;font-size:12px;color:#222;letter-spacing:-0.072px;">Purchase Return Amount</span>
<span class="t" style="left:1439.65px;top:826.00px;font-size:15px;color:#ff0000;letter-spacing:-0.390px;">¥0.00</span>
<span class="t" style="left:1532.93px;top:808.00px;font-size:12px;color:#222;letter-spacing:0.171px;">Total Amount</span>
<span class="t" style="left:1533.05px;top:826.00px;font-size:15px;color:#222;letter-spacing:-0.389px;">¥28,500.00</span>
<div class="r" style="left:1626px;top:797px;width:390px;height:59px;box-sizing:border-box;border:1px solid #858585;border-radius:5px;background:#fff;"></div>
<span class="t" style="left:1641.20px;top:818.00px;font-size:15px;color:#111;letter-spacing:-0.221px;font-weight:700;">USD</span>
<span class="t" style="left:1681.52px;top:808.00px;font-size:12px;color:#222;letter-spacing:-0.047px;">Purchase Amount</span>
<span class="t" style="left:1693.40px;top:826.00px;font-size:15px;color:#222;letter-spacing:-0.389px;">$64,400.00</span>
<span class="t" style="left:1784.62px;top:808.00px;font-size:12px;color:#222;letter-spacing:-0.072px;">Purchase Return Amount</span>
<span class="t" style="left:1833.55px;top:826.00px;font-size:15px;color:#ff0000;letter-spacing:-0.390px;">$0.00</span>
<span class="t" style="left:1926.83px;top:808.00px;font-size:12px;color:#222;letter-spacing:0.171px;">Total Amount</span>
<span class="t" style="left:1926.95px;top:826.00px;font-size:15px;color:#222;letter-spacing:-0.389px;">$64,400.00</span>
</div></div>
<div class="r" style="left:54px;top:858px;width:1859px;height:17px;background:#fff;"></div>
<div class="r" style="left:54px;top:858px;width:1766px;height:17px;background:#ececec;"></div>
<div class="r" style="left:1906px;top:858px;width:7px;height:17px;background:#ececec;"></div>
<div class="r" style="left:1911px;top:866.4px;width:2px;height:1.2px;background:#b5b5b5;"></div>
<svg class="r" style="left:58.4px;top:863px;" width="7.5" height="7.2" viewBox="0 0 7.5 7.2"><path d="M0.8,3.6H6.8M3.8,0.5L0.7,3.6L3.8,6.7" fill="none" stroke="#aaa" stroke-width="1.1"/></svg>
<div class="r" style="left:54px;top:875px;width:1859px;height:53px;background:#ececec;"></div>
<div class="r" style="left:54px;top:875px;width:1859px;height:1px;background:#fcfcfc;"></div>
<span class="t" style="left:62.93px;top:893.00px;font-size:15px;color:#111;letter-spacing:-0.695px;font-weight:700;">TOTAL</span>
<span class="t" style="left:132.02px;top:881.00px;font-size:12px;color:#222;letter-spacing:-0.163px;">Purchase Qty</span>
<span class="t" style="left:149.83px;top:903.00px;font-size:15px;color:#222;letter-spacing:-0.280px;">3,852</span>
<span class="t" style="left:242.02px;top:881.00px;font-size:12px;color:#222;letter-spacing:-0.164px;">Purchase Return Qty</span>
<span class="t" style="left:289.53px;top:903.00px;font-size:15px;color:#ff0000;letter-spacing:1.177px;">-2</span>
<span class="t" style="left:391.03px;top:881.00px;font-size:12px;color:#222;letter-spacing:-0.033px;">Total Qty</span>
<span class="t" style="left:394.96px;top:903.00px;font-size:15px;color:#111;letter-spacing:0.453px;font-weight:700;">3,850</span>
<span class="t" style="left:477.59px;top:881.00px;font-size:12px;color:#222;letter-spacing:-0.165px;">Currency</span>
<span class="t" style="left:485.70px;top:903.00px;font-size:15px;color:#111;letter-spacing:-0.371px;font-weight:700;">USD</span>
<span class="t" style="left:564.42px;top:883.00px;font-size:12px;color:#222;letter-spacing:-0.012px;">Purchase Amount</span>
<span class="t" style="left:576.94px;top:901.00px;font-size:15px;color:#222;letter-spacing:-0.492px;">$98,222.50</span>
<span class="t" style="left:697.92px;top:883.00px;font-size:12px;color:#222;letter-spacing:-0.072px;">Purchase Return Amount</span>
<span class="t" style="left:739.84px;top:901.00px;font-size:15px;color:#ff0000;letter-spacing:-0.155px;">$-22.00</span>
<span class="t" style="left:870.23px;top:883.00px;font-size:12px;color:#222;letter-spacing:0.180px;">Total Amount</span>
<span class="t" style="left:870.30px;top:901.00px;font-size:15px;color:#111;letter-spacing:0.304px;font-weight:700;">$98,200.50</span>
<span class="t" style="left:987.33px;top:883.00px;font-size:12px;color:#222;letter-spacing:-0.745px;">Tax</span>
<span class="t" style="left:987.44px;top:901.00px;font-size:15px;color:#222;letter-spacing:-0.286px;">$127.27</span>
<div class="r btn" style="left:1089px;top:886px;width:73.7px;height:31.8px;background:#2196f3;"></div>
<span class="t" style="left:1105.16px;top:893.00px;font-size:14px;color:#fff;letter-spacing:-0.467px;font-weight:700;">Export</span>
<div class="r" style="left:0px;top:928px;width:1913px;height:1px;background:#c2c2c2;"></div>
<div class="r" style="left:0px;top:929px;width:1913px;height:1px;background:#e6e6e6;"></div>
</body></html>
